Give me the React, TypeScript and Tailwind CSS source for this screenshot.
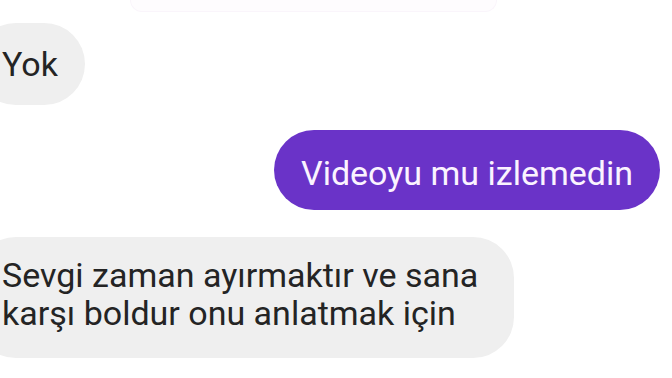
const font = { fontFamily: "Roboto, 'Noto Sans', sans-serif" };

type BubbleProps = {
    lines: string[];
};

const Incoming = ({ lines }: BubbleProps) => (
    <div className="flex justify-start">
        <div className="-ml-[25px] rounded-[41px] bg-[#efefef] pb-[26px] pl-[27px] pr-[36px] pt-[19px] text-[34px] leading-[38px] text-[#242424]">
            {lines.map((t) => (
                <div key={t}>{t}</div>
            ))}
        </div>
    </div>
);

export default function App() {
    return (
        <div className="h-[378px] w-[672px] overflow-hidden bg-white" style={font}>
            <div className="ml-[130px] h-[12px] w-[367px] rounded-b-[20px] border border-t-0 border-[#faf5fb] bg-[#fefcfe]" />
            <div className="mt-[11px] flex justify-start">
                <div className="-ml-[25px] flex h-[82px] items-center rounded-full bg-[#efefef] pl-[27px] pr-[27px] text-[34px] leading-[38px] text-[#242424]">
                    Yok
                </div>
            </div>
            <div className="mt-[25px] flex justify-end pr-[12px]">
                <div className="flex h-[80px] items-center rounded-full bg-[#6a33c8] px-[27px] pt-[6px] text-[34px] leading-[38px] text-[#fbf3ff]">
                    Videoyu mu izlemedin
                </div>
            </div>
            <div className="mt-[27px]">
                <Incoming lines={["Sevgi zaman ayırmaktır ve sana", "karşı boldur onu anlatmak için"]} />
            </div>
        </div>
    );
}
